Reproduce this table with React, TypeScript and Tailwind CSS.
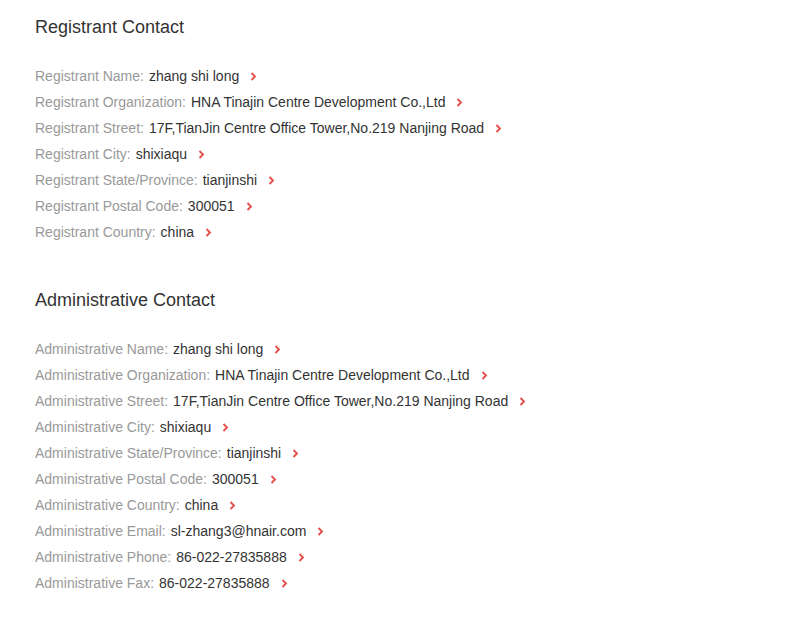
import React from "react";

const Chevron = () => (
  <svg width="7" height="9" viewBox="0 0 7 9" className="ml-[11px] shrink-0">
    <path d="M1.5 1 L5 4.5 L1.5 8" fill="none" stroke="#e4504c" strokeWidth="1.9" />
  </svg>
);

const Row = ({ label, value }: { label: string; value: string }) => (
  <div className="flex items-center h-[26px] text-[14px] leading-[26px]">
    <span className="text-[#999999]">{label}:</span>
    <span className="ml-[5px] text-[#333333]">{value}</span>
    <Chevron />
  </div>
);

const Section = ({ title, rows }: { title: string; rows: [string, string][] }) => (
  <div>
    <h2 className="text-[18px] leading-[24px] text-[#333333]">{title}</h2>
    <div className="mt-[24px]">
      {rows.map(([l, v]) => (
        <Row key={l} label={l} value={v} />
      ))}
    </div>
  </div>
);

export default function App() {
  const reg: [string, string][] = [
    ["Registrant Name", "zhang shi long"],
    ["Registrant Organization", "HNA Tinajin Centre Development Co.,Ltd"],
    ["Registrant Street", "17F,TianJin Centre Office Tower,No.219 Nanjing Road"],
    ["Registrant City", "shixiaqu"],
    ["Registrant State/Province", "tianjinshi"],
    ["Registrant Postal Code", "300051"],
    ["Registrant Country", "china"],
  ];
  const adm: [string, string][] = [
    ["Administrative Name", "zhang shi long"],
    ["Administrative Organization", "HNA Tinajin Centre Development Co.,Ltd"],
    ["Administrative Street", "17F,TianJin Centre Office Tower,No.219 Nanjing Road"],
    ["Administrative City", "shixiaqu"],
    ["Administrative State/Province", "tianjinshi"],
    ["Administrative Postal Code", "300051"],
    ["Administrative Country", "china"],
    ["Administrative Email", "sl-zhang3@hnair.com"],
    ["Administrative Phone", "86-022-27835888"],
    ["Administrative Fax", "86-022-27835888"],
  ];
  return (
    <div
      className="w-[797px] h-[621px] bg-white pl-[35px] pt-[15px]"
      style={{ fontFamily: '"Liberation Sans", Arial, sans-serif' }}
    >
      <Section title="Registrant Contact" rows={reg} />
      <div className="mt-[43px]">
        <Section title="Administrative Contact" rows={adm} />
      </div>
    </div>
  );
}
